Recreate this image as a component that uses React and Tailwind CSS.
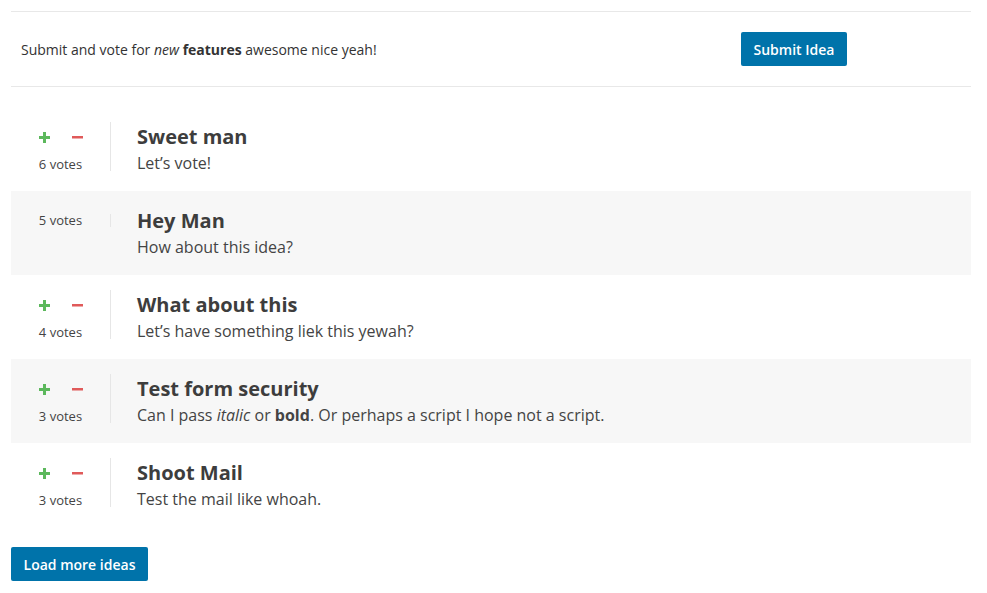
import React from "react";

const ideas = [
  { title: "Sweet man", desc: <>Let’s vote!</>, votes: 6, buttons: true, bg: false },
  { title: "Hey Man", desc: <>How about this idea?</>, votes: 5, buttons: false, bg: true },
  { title: "What about this", desc: <>Let’s have something liek this yewah?</>, votes: 4, buttons: true, bg: false },
  {
    title: "Test form security",
    desc: (
      <>
        Can I pass <em>italic</em> or <strong>bold</strong>. Or perhaps a script I hope not a script.
      </>
    ),
    votes: 3,
    buttons: true,
    bg: true,
  },
  { title: "Shoot Mail", desc: <>Test the mail like whoah.</>, votes: 3, buttons: true, bg: false },
];

function Plus() {
  return (
    <svg width="11" height="11" viewBox="0 0 11 11" className="block">
      <rect x="4" y="0" width="3" height="11" fill="#5cb85c" />
      <rect x="0" y="4" width="11" height="3" fill="#5cb85c" />
    </svg>
  );
}

function Minus() {
  return (
    <svg width="11" height="3" viewBox="0 0 11 3" className="block">
      <rect x="0" y="0" width="11" height="2.5" fill="#e05a5a" />
    </svg>
  );
}

function Row({ idea }) {
  return (
    <div className={`flex h-[84px] ${idea.bg ? "bg-[#f7f7f7]" : "bg-white"}`}>
      <div
        className={`w-[100px] self-start border-r border-[#e6e6e6] flex flex-col items-center ${
          idea.buttons ? "mt-[15px]" : "mt-[23px]"
        }`}
      >
        {idea.buttons && (
          <div className="flex items-center justify-center gap-[22px] h-[30px] mb-[6px] pl-[1px]">
            <button className="p-0 flex items-center justify-center w-[11px] h-[11px]">
              <Plus />
            </button>
            <button className="p-0 flex items-center justify-center w-[11px] h-[11px]">
              <Minus />
            </button>
          </div>
        )}
        <div className="text-[13px] leading-[13px] text-[#444]">{idea.votes} votes</div>
      </div>
      <div className="pl-[26px] pt-[16px]">
        <div className="text-[20px] leading-[28px] font-bold text-[#3d3d3d]">{idea.title}</div>
        <div className="text-[16px] leading-[24px] text-[#444]">{idea.desc}</div>
      </div>
    </div>
  );
}

export default function App() {
  return (
    <div
      className="bg-white w-[987px] h-[593px] pt-[11px] pl-[11px]"
      style={{ fontFamily: '"Open Sans", "Noto Sans", sans-serif' }}
    >
      <div className="w-[960px]">
        <div className="flex items-center h-[76px] border-t border-b border-[#e8e8e8]">
          <div className="w-[730px] pl-[10px] text-[14px] text-[#333]">
            Submit and vote for <em>new</em> <strong>features</strong> awesome nice yeah!
          </div>
          <button className="h-[34px] w-[106px] bg-[#0073aa] text-white text-[14px] font-semibold rounded-[2px]">
            Submit Idea
          </button>
        </div>
        <div className="mt-[20px]">
          {ideas.map((idea, i) => (
            <Row key={i} idea={idea} />
          ))}
        </div>
        <button className="mt-[20px] h-[34px] w-[137px] bg-[#0073aa] text-white text-[14px] font-semibold rounded-[2px]">
          Load more ideas
        </button>
      </div>
    </div>
  );
}
